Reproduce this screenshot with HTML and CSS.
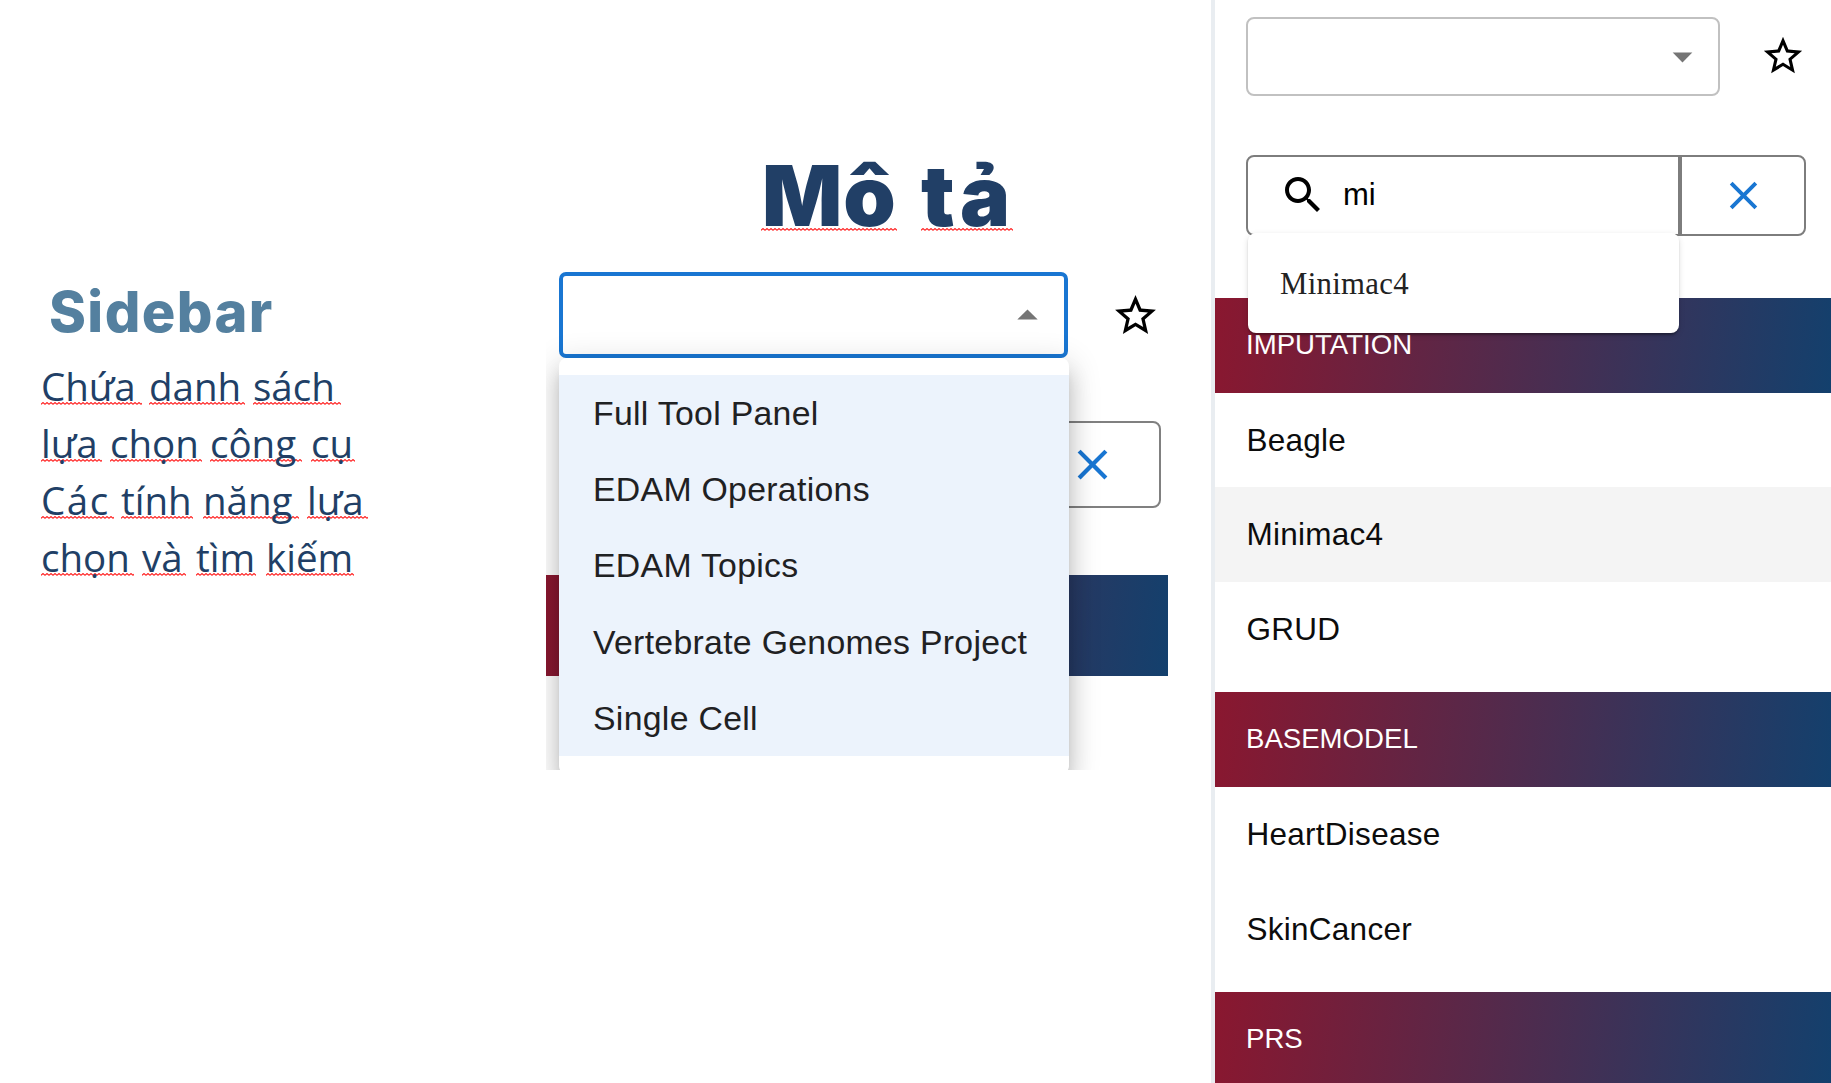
FILE: index.html
```html
<!DOCTYPE html>
<html lang="vi">
<head>
<meta charset="utf-8">
<title>Mô tả – Sidebar</title>
<link rel="stylesheet" href="styles.css">
</head>
<body>
<svg width="0" height="0" class="defs" aria-hidden="true">
  <symbol id="star" viewBox="0 0 24 24"><path d="m22 9.24-7.19-.62L12 2 9.19 8.63 2 9.24l5.46 4.73L5.82 21 12 17.27 18.18 21l-1.63-7.03L22 9.24zM12 15.4l-3.76 2.27 1-4.28-3.32-2.88 4.38-.38L12 6.1l1.71 4.04 4.38.38-3.32 2.88 1 4.28L12 15.4z"/></symbol>
  <symbol id="close" viewBox="0 0 24 24"><path d="M19 6.41 17.59 5 12 10.59 6.41 5 5 6.41 10.59 12 5 17.59 6.41 19 12 13.41 17.59 19 19 17.59 13.41 12z"/></symbol>
  <symbol id="search" viewBox="0 0 24 24"><path d="M15.5 14h-.79l-.28-.27C15.41 12.59 16 11.11 16 9.5 16 5.91 13.09 3 9.5 3S3 5.91 3 9.5 5.91 16 9.5 16c1.61 0 3.09-.59 4.23-1.57l.27.28v.79l5 4.99L20.49 19l-4.99-5zm-6 0C7.01 14 5 11.99 5 9.5S7.01 5 9.5 5 14 7.01 14 9.5 11.99 14 9.5 14z"/></symbol>
  <symbol id="down" viewBox="0 0 24 24"><path d="m7 10 5 5 5-5z"/></symbol>
</svg>
<main class="slide">
  <section class="notes">
    <h2>Sidebar</h2>
    <p class="line l1"><span>Chứa</span><span>danh</span><span>sách</span></p>
    <p class="line l2"><span>lựa</span><span>chọn</span><span>công</span><span>cụ</span></p>
    <p class="line l3"><span>Các</span><span>tính</span><span>năng</span><span>lựa</span></p>
    <p class="line l4"><span>chọn</span><span>và</span><span>tìm</span><span>kiếm</span></p>
  </section>
  <section class="center">
    <h1><span class="w1">Mô</span><span class="w2">tả</span></h1>
    <div class="panel">
      <div class="row">
        <div class="select open"><svg class="arrow up"><use href="#down"/></svg></div>
        <svg class="star"><use href="#star"/></svg>
      </div>
      <div class="clearbox"><svg><use href="#close"/></svg></div>
      <div class="band"></div>
      <ul class="menu">
        <li>Full Tool Panel</li>
        <li>EDAM Operations</li>
        <li>EDAM Topics</li>
        <li>Vertebrate Genomes Project</li>
        <li>Single Cell</li>
      </ul>
    </div>
  </section>
  <aside class="tools">
    <div class="row">
      <div class="select"><svg class="arrow"><use href="#down"/></svg></div>
      <svg class="star"><use href="#star"/></svg>
    </div>
    <div class="search">
      <div class="field"><svg><use href="#search"/></svg><span>mi</span></div>
      <div class="clear"><svg><use href="#close"/></svg></div>
      <div class="suggest">Minimac4</div>
    </div>
    <div class="group">
      <h3>IMPUTATION</h3>
      <div class="item">Beagle</div>
      <div class="item hover">Minimac4</div>
      <div class="item">GRUD</div>
    </div>
    <div class="group">
      <h3>BASEMODEL</h3>
      <div class="item">HeartDisease</div>
      <div class="item">SkinCancer</div>
    </div>
    <div class="group">
      <h3>PRS</h3>
    </div>
  </aside>
</main>
</body>
</html>
```
FILE: styles.css
```css
* { box-sizing: border-box; }
body { margin: 0; background: #fff; font-family: "Liberation Sans", Arial, sans-serif; }
h1, h2, h3, p, ul { margin: 0; padding: 0; font-weight: normal; }
svg { display: block; flex: none; }
.defs { position: absolute; }

.slide { display: grid; grid-template-columns: 546px 665px 620px; height: 1083px; overflow: hidden; }

/* left notes */
.notes { padding: 280px 0 0 41px; color: #213f66; }
h2 { font: 800 56px/64px Inter, sans-serif; color: #54809f; padding-left: 8px; height: 77.5px; letter-spacing: 1.4px; }
.line { display: flex; height: 57.2px; font: 400 38.5px/57px "Open Sans", "Noto Sans", sans-serif; white-space: nowrap; }
.line span, h1 span {
  background: url("data:image/svg+xml,%3Csvg xmlns='http://www.w3.org/2000/svg' width='4' height='3'%3E%3Cpath d='M0 2.4 2 .6 4 2.4' fill='none' stroke='%23f22' stroke-width='1.2'/%3E%3C/svg%3E") repeat-x 0 44px;
}
.line span { flex: none; }
.l1 span:nth-child(1) { width: 101px; margin-right: 7px; }
.l1 span:nth-child(2) { width: 96px; margin-right: 8px; }
.l1 span:nth-child(3) { width: 88px; }
.l2 span:nth-child(1) { width: 61px; margin-right: 8px; }
.l2 span:nth-child(2) { width: 92px; margin-right: 8px; }
.l2 span:nth-child(3) { width: 92px; margin-right: 9px; }
.l2 span:nth-child(4) { width: 44px; }
.l3 span:nth-child(1) { width: 73px; margin-right: 7px; letter-spacing: 1.5px; }
.l3 span:nth-child(2) { width: 72px; margin-right: 10px; }
.l3 span:nth-child(3) { width: 96px; margin-right: 8px; }
.l3 span:nth-child(4) { width: 61px; }
.l4 span:nth-child(1) { width: 93px; margin-right: 8px; }
.l4 span:nth-child(2) { width: 44px; margin-right: 10px; }
.l4 span:nth-child(3) { width: 60px; margin-right: 10px; }
.l4 span:nth-child(4) { width: 88px; }

/* centre */
.center { padding-top: 146px; }
h1 { display: flex; gap: 24px; height: 119px; padding-left: 215px; font: 900 84px/100px Inter, sans-serif; color: #213f66; }
h1 span { height: 85px; background-position: 0 82px; white-space: nowrap; }
.w1 { width: 136px; padding-left: 1px; letter-spacing: 1px; }
.w2 { width: 92px; letter-spacing: 5px; }
.panel { position: relative; width: 622px; height: 505px; padding-top: 7px; overflow: hidden; }
.panel .row { display: flex; align-items: center; padding-left: 13px; height: 86px; }
.select { display: flex; align-items: center; justify-content: flex-end; border: 2px solid #c1c1c1; border-radius: 8px; }
.select.open { width: 509px; height: 86px; border: 4px solid #1976d2; border-radius: 7px; padding-right: 12px; }
.arrow { width: 49px; height: 49px; fill: #757575; }
.up { transform: rotate(180deg); }
.panel .star { width: 49px; height: 49px; margin-left: 42.5px; }
.clearbox { display: flex; align-items: center; width: 134px; height: 87px; margin: 63px 0 0 481px; padding-left: 38px; border: 2px solid #808080; border-radius: 8px; }
.clearbox svg { width: 51px; height: 51px; fill: #1976d2; }
.band { height: 101px; margin-top: 67.4px; background: linear-gradient(97deg, #8a172f, #13406d); }
.menu { position: absolute; left: 13px; top: 93px; width: 510px; height: 416px; padding-top: 17px; list-style: none; background: #fff; border-radius: 8px; box-shadow: 0 11px 11px -6px rgba(0,0,0,.2), 0 17px 21px 2px rgba(0,0,0,.14), 0 6px 30px 5px rgba(0,0,0,.12); }
.menu li { height: 76.2px; padding-left: 34px; background: #ecf3fc; color: #1f2123; font-size: 33.8px; line-height: 76px; letter-spacing: .3px; white-space: nowrap; }

/* right tools */
.tools { border-left: 4px solid #e9edf1; padding-top: 16px; }
.tools .row { display: flex; align-items: center; padding-left: 31px; height: 80px; }
.tools .select { width: 474px; height: 79px; padding-right: 12px; }
.tools .arrow { width: 47px; height: 47px; }
.tools .star { width: 46px; height: 46px; margin-left: 40px; }
.search { position: relative; display: flex; width: 560px; height: 81px; margin: 58.5px 0 62.8px 31px; }
.field { display: flex; align-items: center; width: 434px; border: 2px solid #7d7d7d; border-radius: 8px 0 0 8px; padding-left: 31px; font-size: 31px; }
.field svg { width: 48px; height: 48px; margin-right: 16px; }
.clear { flex: 1; display: flex; align-items: center; justify-content: center; border: 2px solid #7d7d7d; border-radius: 0 8px 8px 0; }
.clear svg { width: 47px; height: 47px; fill: #1976d2; }
.suggest { position: absolute; left: 2px; top: 78px; width: 431px; height: 100px; padding-left: 32px; background: #fff; border-radius: 8px; font: 30.8px/102px "Liberation Serif", "Times New Roman", serif; letter-spacing: .28px; color: #222; box-shadow: 0 4px 2px -2px rgba(0,0,0,.2), 0 2px 2px rgba(0,0,0,.14), 0 2px 6px rgba(0,0,0,.12); }
.group { padding-bottom: 15.7px; }
h3 { height: 94.6px; padding-left: 31px; background: linear-gradient(97deg, #8a172f, #13406d); color: #fff; font-size: 27.6px; line-height: 93px; }
.item { height: 94.6px; padding-left: 31.4px; font-size: 31.5px; line-height: 95px; letter-spacing: .28px; color: #0c0c0c; }
.hover { background: #f4f4f4; }
```
